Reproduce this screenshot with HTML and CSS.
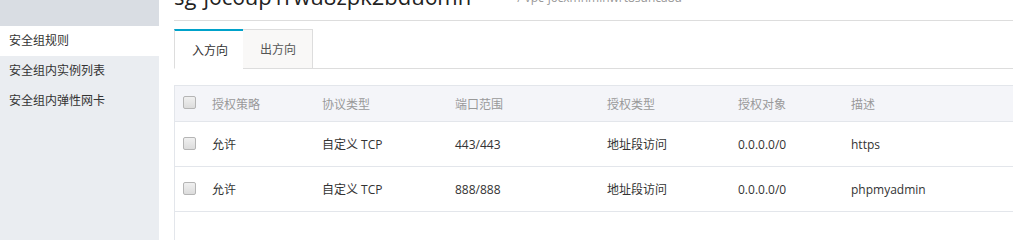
FILE: index.html
```html
<!DOCTYPE html>
<html lang="zh-CN">
<head>
<meta charset="utf-8">
<title>安全组规则</title>
<link rel="stylesheet" href="styles.css">
</head>
<body>
<div class="layout">
  <aside class="sidebar">
    <div class="sidebar-top"></div>
    <nav class="menu">
      <a class="menu-item active">安全组规则</a>
      <a class="menu-item">安全组内实例列表</a>
      <a class="menu-item">安全组内弹性网卡</a>
    </nav>
  </aside>
  <main class="main">
    <header class="page-head">
      <h1 class="title">sg-j6c6up1rwu8zpk2bdu6mh<span class="subtitle">/ vpc-j6cxmnmlnwrt8sdhca8d</span></h1>
    </header>
    <div class="tabs">
      <div class="tab active">入方向</div>
      <div class="tab">出方向</div>
      <div class="tabs-rest"></div>
    </div>
    <div class="table">
      <div class="row head">
        <div class="cell chk"><span class="checkbox"></span></div>
        <div class="cell">授权策略</div>
        <div class="cell">协议类型</div>
        <div class="cell">端口范围</div>
        <div class="cell">授权类型</div>
        <div class="cell">授权对象</div>
        <div class="cell">描述</div>
      </div>
      <div class="row">
        <div class="cell chk"><span class="checkbox"></span></div>
        <div class="cell">允许</div>
        <div class="cell">自定义 TCP</div>
        <div class="cell">443/443</div>
        <div class="cell">地址段访问</div>
        <div class="cell">0.0.0.0/0</div>
        <div class="cell">https</div>
      </div>
      <div class="row">
        <div class="cell chk"><span class="checkbox"></span></div>
        <div class="cell">允许</div>
        <div class="cell">自定义 TCP</div>
        <div class="cell">888/888</div>
        <div class="cell">地址段访问</div>
        <div class="cell">0.0.0.0/0</div>
        <div class="cell">phpmyadmin</div>
      </div>
      <div class="row empty"></div>
    </div>
  </main>
</div>
</body>
</html>
```
FILE: styles.css
```css
html, body {
  margin: 0;
  padding: 0;
  height: 100%;
  overflow: hidden;
  background: #fff;
}
body {
  font-family: "Open Sans", "Noto Sans CJK SC", sans-serif;
  font-size: 12px;
  color: #333;
}
.layout {
  display: flex;
  height: 100%;
}
.sidebar {
  width: 159px;
  flex: none;
  background: #eaedf1;
  display: flex;
  flex-direction: column;
}
.sidebar-top {
  height: 26px;
  background: #d9dde3;
}
.menu {
  display: flex;
  flex-direction: column;
}
.menu-item {
  display: block;
  height: 30px;
  line-height: 30px;
  padding-left: 9px;
  color: #333;
  white-space: nowrap;
}
.menu-item.active {
  background: #fff;
}
.main {
  flex: 1;
  min-width: 0;
  padding-left: 15px;
  overflow: hidden;
}
.page-head {
  display: flow-root;
  height: 20px;
  border-bottom: 1px solid #dddddd;
}
.title {
  margin: -15px 0 0 0;
  font-size: 22px;
  line-height: 22px;
  font-weight: normal;
  color: #222;
  white-space: nowrap;
}
.subtitle {
  margin-left: 46px;
  font-size: 12px;
  color: #999;
  vertical-align: 3px;
}
.tabs {
  display: flex;
  margin-top: 8px;
}
.tab {
  height: 38px;
  line-height: 40px;
  padding: 0 17px;
  border: 1px solid #dddddd;
  border-left: none;
  background: #f9f8f7;
  color: #555;
  white-space: nowrap;
}
.tab.active {
  width: 34px;
  border-top: 2px solid #00a2ca;
  border-left: 1px solid #dddddd;
  border-right: none;
  border-bottom: 1px solid #fff;
  height: 37px;
  background: #fff;
  color: #333;
}
.tab:not(.active) {
  width: 35px;
}
.tabs-rest {
  flex: 1;
  border-bottom: 1px solid #dddddd;
}
.table {
  margin-top: 16px;
  border-top: 1px solid #e3e6eb;
  border-left: 1px solid #e3e6eb;
}
.row {
  display: grid;
  grid-template-columns: 37px 110px 133px 152px 131px 113px 1fr;
  align-items: center;
  height: 44px;
  border-bottom: 1px solid #e3e6eb;
}
.row.head {
  height: 35px;
  background: #f4f5f9;
  color: #999;
}
.cell {
  white-space: nowrap;
}
.cell.chk {
  padding-left: 8px;
  display: flex;
  align-items: center;
}
.checkbox {
  display: block;
  width: 11px;
  height: 11px;
  border: 1px solid #b5b5b5;
  border-radius: 2px;
  background: linear-gradient(#f0f0f0, #dcdcdc);
  margin-top: -2px;
}
```
